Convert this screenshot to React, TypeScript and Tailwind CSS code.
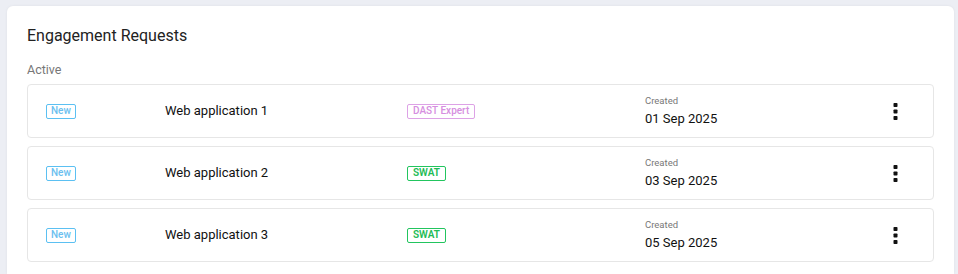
import { } from 'react';

const requests = [
  { name: 'Web application 1', tag: 'DAST Expert', tone: 'pink', created: '01 Sep 2025' },
  { name: 'Web application 2', tag: 'SWAT', tone: 'green', created: '03 Sep 2025' },
  { name: 'Web application 3', tag: 'SWAT', tone: 'green', created: '05 Sep 2025' },
];

function Kebab() {
  return (
    <svg width="5" height="18" viewBox="0 0 5 18" className="text-[#111]">
      <rect x="0.5" y="1" width="4" height="4" rx="0.8" fill="currentColor" />
      <rect x="0.5" y="7.5" width="4" height="4" rx="0.8" fill="currentColor" />
      <rect x="0.5" y="14" width="4" height="4" rx="0.8" fill="currentColor" />
    </svg>
  );
}

export default function App() {
  return (
    <div className="min-h-screen bg-[#eceef4] pt-[6px] pl-[7px] pr-[4px] font-['Roboto',sans-serif]">
      <div className="bg-white rounded-t-[6px] shadow-[0_0_3px_rgba(0,0,0,0.06)] pl-[20px] pr-[20px] pt-[20px] pb-[12px] min-h-[268px]">
        <h1 className="text-[16px] leading-[20px] text-[#222]">Engagement Requests</h1>
        <p className="mt-[16px] text-[12.5px] leading-[16px] text-[#777]">Active</p>

        <div className="mt-[6px] flex flex-col gap-[8px]">
          {requests.map((r) => (
            <div
              key={r.name}
              className="h-[54px] border border-[#e6e6e6] rounded-[4px] flex items-center pl-[18px]"
            >
              <div className="w-[119px] shrink-0 flex items-center">
                <span className="flex items-center h-[15px] px-[4px] border border-[#5bc0f2] rounded-[2px] text-[10px] font-medium text-[#6cbfef] leading-none">
                  New
                </span>
              </div>
              <div className="w-[242px] shrink-0 text-[13px] leading-[18px] text-[#111]">{r.name}</div>
              <div className="w-[238px] shrink-0 flex items-center">
                {r.tone === 'pink' ? (
                  <span className="flex items-center h-[15px] px-[5px] border border-[#dda2e6] rounded-[2px] text-[10px] font-medium text-[#d68ee0] leading-none">
                    {r.tag}
                  </span>
                ) : (
                  <span className="flex items-center h-[15px] px-[5px] border border-[#22c55e] rounded-[2px] text-[10px] font-semibold text-[#22bb55] leading-none">
                    {r.tag}
                  </span>
                )}
              </div>
              <div className="flex-1 flex flex-col">
                <span className="text-[9.5px] leading-[12px] text-[#777]">Created</span>
                <span className="mt-[3px] text-[13px] leading-[17px] text-[#111]">{r.created}</span>
              </div>
              <div className="w-[76px] shrink-0 flex justify-center">
                <Kebab />
              </div>
            </div>
          ))}
        </div>
      </div>
    </div>
  );
}
